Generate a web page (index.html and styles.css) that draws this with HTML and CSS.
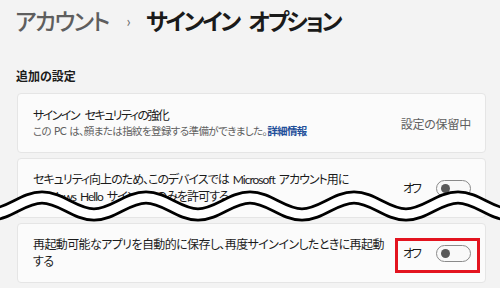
FILE: index.html
```html
<!DOCTYPE html>
<html lang="ja">
<head>
<meta charset="utf-8">
<link rel="stylesheet" href="styles.css">
</head>
<body>
<div class="page">
  <h1 class="crumbs"><span class="parent">アカウント</span><span class="sep">›</span><span class="current">サインイン オプション</span></h1>
  <h2 class="section">追加の設定</h2>
  <div class="cards">
    <div class="card first">
      <div class="text">
        <div class="title">サインイン セキュリティの強化</div>
        <div class="desc">この PC は、顔または指紋を登録する準備ができました。<a class="link">詳細情報</a></div>
      </div>
      <div class="status">設定の保留中</div>
    </div>
    <div class="card">
      <div class="text tight">セキュリティ向上のため、このデバイスでは Microsoft アカウント用に<br>Windows Hello サインインのみを許可する</div>
      <div class="control"><span class="state">オフ</span><span class="toggle"><span class="knob"></span></span></div>
    </div>
    <div class="card">
      <div class="text loose">再起動可能なアプリを自動的に保存し、再度サインインしたときに再起動<br>する</div>
      <div class="control"><span class="state">オフ</span><span class="toggle"><span class="knob"></span></span><span class="mark"></span></div>
    </div>
  </div>
  <svg class="tear" width="500" height="60" viewBox="0 0 500 60">
    <path class="edge" d="M-10 44.5 C 9 44.5, 23 27.5, 42 27.5 C 61 27.5, 75 44.5, 94 44.5 C 113 44.5, 127 27.5, 146 27.5 C 165 27.5, 179 44.5, 198 44.5 C 217 44.5, 231 27.5, 250 27.5 C 269 27.5, 283 44.5, 302 44.5 C 321 44.5, 335 27.5, 354 27.5 C 373 27.5, 387 44.5, 406 44.5 C 425 44.5, 439 27.5, 458 27.5 C 477 27.5, 491 44.5, 510 44.5"/>
    <path class="fill" d="M-10 44.5 C 9 44.5, 23 27.5, 42 27.5 C 61 27.5, 75 44.5, 94 44.5 C 113 44.5, 127 27.5, 146 27.5 C 165 27.5, 179 44.5, 198 44.5 C 217 44.5, 231 27.5, 250 27.5 C 269 27.5, 283 44.5, 302 44.5 C 321 44.5, 335 27.5, 354 27.5 C 373 27.5, 387 44.5, 406 44.5 C 425 44.5, 439 27.5, 458 27.5 C 477 27.5, 491 44.5, 510 44.5"/>
  </svg>
</div>
</body>
</html>
```

FILE: styles.css
```css
* { box-sizing: border-box; }
html, body { margin: 0; padding: 0; }
body {
  background: #f3f3f3;
  font-family: "Lato", "Noto Sans CJK JP", sans-serif;
  font-feature-settings: "palt";
  color: #1b1b1b;
  width: 500px;
  height: 288px;
  overflow: hidden;
}
.page {
  position: relative;
  padding: 5px 14px 0 17px;
}
.crumbs {
  margin: 0 0 0 -2px;
  font-size: 23px;
  line-height: 32px;
  font-weight: 600;
  display: flex;
  align-items: center;
  white-space: nowrap;
  letter-spacing: -1.6px;
}
.parent { color: #5e5e5e; font-weight: 500; }
.sep {
  color: #6b6b6b;
  font-size: 15px;
  font-weight: 400;
  letter-spacing: 0;
  margin: 0 15px 0 18px;
}
.current { color: #1a1a1a; font-weight: 700; letter-spacing: -2.4px; word-spacing: 6px; }
.section {
  margin: 31px 0 7px -1px;
  font-size: 12px;
  line-height: 18px;
  font-weight: 700;
  color: #1b1b1b;
}
.cards {
  display: flex;
  flex-direction: column;
  gap: 5px;
}
.card {
  background: #fbfbfb;
  border: 1px solid #e5e5e5;
  border-radius: 4px;
  padding: 12px 14px 12px 15px;
  display: flex;
  align-items: center;
  justify-content: space-between;
  font-size: 12px;
  line-height: 17px;
  letter-spacing: -0.75px;
  white-space: nowrap;
}
.card.first { padding: 14px 14px 13px 15px; }
.text.tight { letter-spacing: -1px; word-spacing: 2px; }
.text.loose { letter-spacing: -0.6px; }
.title { font-size: 12px; line-height: 16px; letter-spacing: -1.55px; word-spacing: 4px; }
.desc { font-size: 10.5px; line-height: 15px; color: #5f5f5f; letter-spacing: -0.6px; word-spacing: 1px; }
.link { color: #1f4f9a; font-weight: 700; }
.status { color: #5f5f5f; font-size: 12px; margin-top: 2px; letter-spacing: -0.2px; }
.control {
  position: relative;
  flex-shrink: 0;
  display: flex;
  align-items: center;
  gap: 16px;
}
.state { font-size: 12px; color: #1b1b1b; letter-spacing: -2px; }
.toggle {
  position: relative;
  width: 35px;
  height: 17px;
  border: 1px solid #8a8a8a;
  border-radius: 9px;
  background: #f9f9f9;
}
.knob {
  position: absolute;
  left: 4px;
  top: 3px;
  width: 9px;
  height: 9px;
  border-radius: 50%;
  background: #5a5a5a;
}
.mark {
  position: absolute;
  left: -8px;
  right: -9px;
  top: -7px;
  bottom: -11px;
  border: 3px solid #e3141f;
}
.tear {
  position: absolute;
  left: 0;
  top: 170px;
  overflow: visible;
}
.tear path { fill: none; stroke-linecap: round; }
.tear .edge { stroke: #000; stroke-width: 14; }
.tear .fill { stroke: #fff; stroke-width: 8.5; }
```
